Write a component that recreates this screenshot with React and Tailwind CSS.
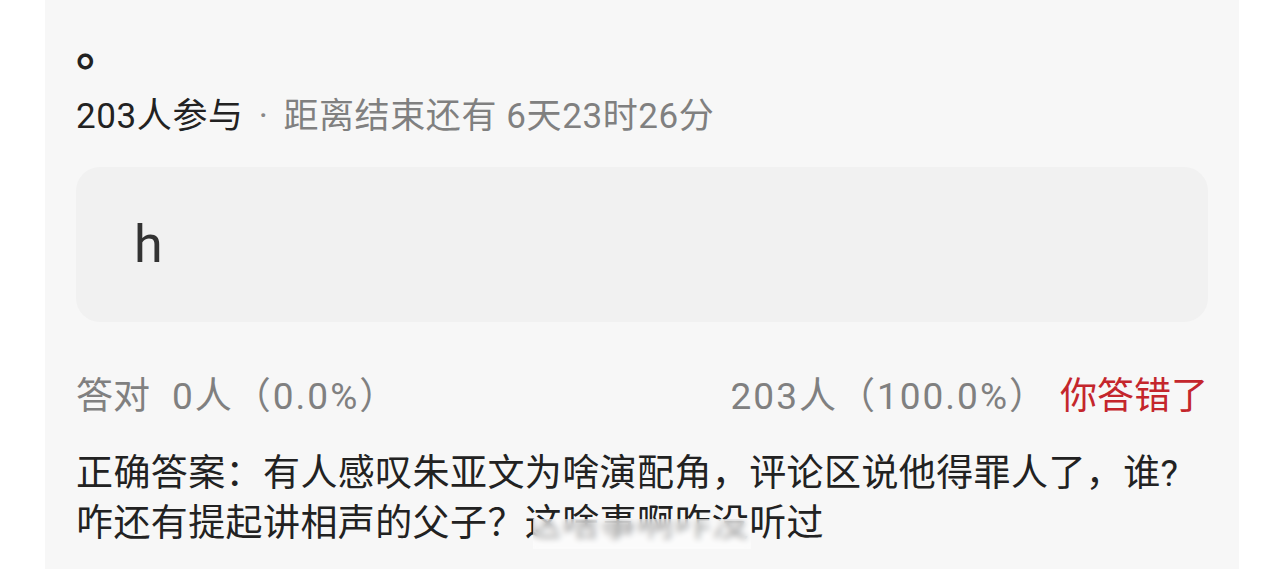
import React from 'react';

const font = { fontFamily: '"Roboto", "Noto Sans CJK SC", sans-serif' };

const QuizResult = () => {
  return (
    <div className="w-full h-[569px] bg-white overflow-hidden pl-[45px]" style={font}>
      <div className="w-[1194px] h-full bg-[#f7f7f7] px-[31px] pt-[24px]">
        {/* Title tail */}
        <div className="text-[48px] font-bold leading-[50px] text-[#222]">。</div>

        {/* Meta */}
        <div className="mt-[18px] text-[35px] leading-[50px] tracking-[0.6px] text-[#222] flex items-center">
          <span>203人参与</span>
          <span className="text-[#888] mx-[15px]">·</span>
          <span className="text-[#808080]">距离结束还有 6天23时26分</span>
        </div>

        {/* Option */}
        <div className="mt-[25px] h-[155px] rounded-[24px] bg-[#f1f1f1] flex items-center pl-[58px]">
          <span className="text-[52px] leading-none text-[#333]">h</span>
        </div>

        {/* Stats */}
        <div className="mt-[50px] flex items-center justify-between text-[37px] leading-[50px] text-[#808080]">
          <div className="flex items-center">
            <span>答对</span>
            <span className="ml-[22px] tracking-[2px]">0人（0.0%）</span>
          </div>
          <div className="flex items-center">
            <span className="tracking-[2px]">203人（100.0%）</span>
            <span className="ml-[12px] text-[#c4262c]">你答错了</span>
          </div>
        </div>

        {/* Answer */}
        <div className="relative mt-[27px] text-[37px] leading-[50px] tracking-[0.4px] text-[#222]">
          <p>正确答案：有人感叹朱亚文为啥演配角，评论区说他得罪人了，谁?</p>
          <p>咋还有提起讲相声的父子？这啥事啊咋没听过</p>
          <div className="absolute left-[457px] top-[70px] w-[218px] h-[30px] bg-white/55 backdrop-blur-[3px]" />
        </div>
      </div>
    </div>
  );
};

export default function App() {
  return <QuizResult />;
}
